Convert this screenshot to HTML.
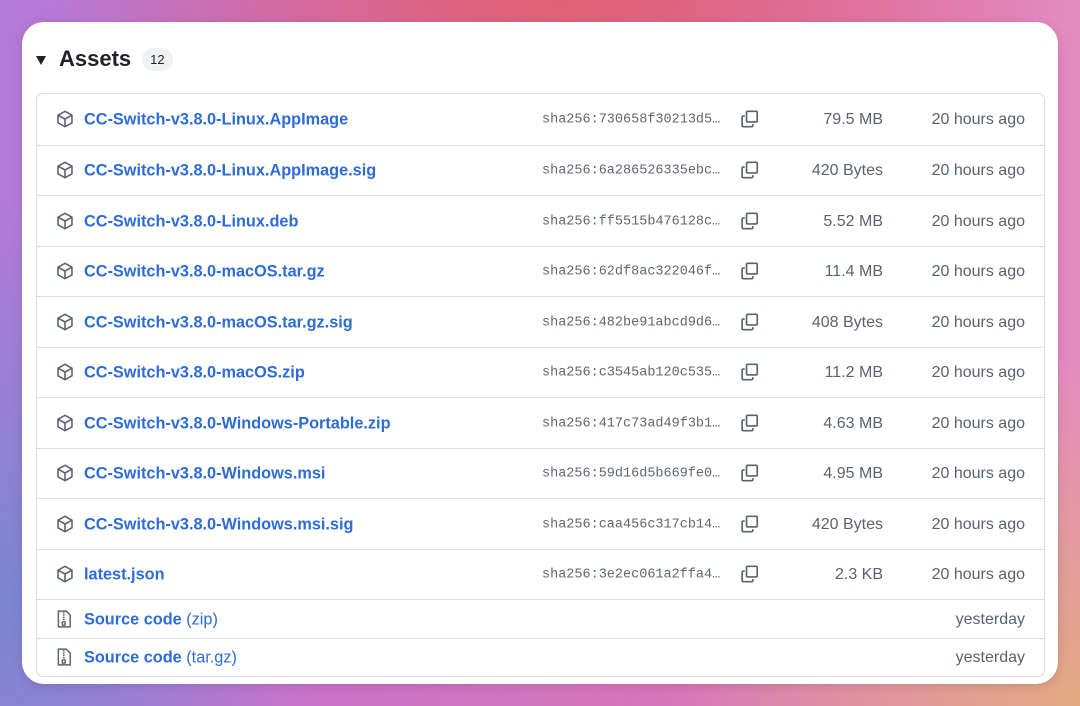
<!DOCTYPE html>
<html><head><meta charset="utf-8"><style>
*{margin:0;padding:0;box-sizing:border-box}
body{width:1080px;height:706px;overflow:hidden;font-family:"Liberation Sans",sans-serif;
background:
radial-gradient(ellipse 500px 120px at 560px 0px,#e25f70 0%,rgba(226,95,112,0) 100%),
linear-gradient(90deg,#b37ad8 0%,#c973c9 30%,#d874b8 60%,#e48bc0 100%);
position:relative}
.bg2{position:absolute;inset:0;
background:radial-gradient(ellipse 300px 400px at 0px 600px,#7a86d2 0%,rgba(122,134,210,0) 100%),
radial-gradient(ellipse 400px 350px at 1080px 706px,#e2a980 0%,rgba(226,169,128,0) 100%)}
.card{position:absolute;left:22px;top:22px;width:1036px;height:662px;background:#fff;border-radius:22px;box-shadow:0 2px 10px rgba(0,0,0,.12)}
.hdr{position:absolute;left:36px;top:46px;display:flex;align-items:center}
.tri{width:0;height:0;border-left:5.5px solid transparent;border-right:5.5px solid transparent;border-top:9px solid #1f2328;margin-right:13px;margin-top:3px}
.hdr h2{font-size:22px;font-weight:bold;color:#1f2328;margin-right:11px}
.badge{background:#eff1f3;border-radius:12px;font-size:13px;color:#1f2328;padding:4px 8px}
.tbl{position:absolute;left:36px;top:93px;width:1009px;border:1px solid #d8dee4;border-radius:7px}
.row{position:relative;height:50.5px;border-top:1px solid #d8dee4}
.row:first-child{border-top:none}
.row.s{height:38.5px}
.ic{position:absolute;left:19px;top:50%;transform:translateY(-50%)}
.nm{position:absolute;left:47px;top:50%;transform:translateY(-45%);font-size:16.3px;font-weight:bold;color:#2d6cd6;white-space:nowrap}
.nm span{font-weight:normal}
.hs{position:absolute;left:505px;top:50%;transform:translateY(-45%);font-family:"Liberation Mono",monospace;font-size:13.5px;color:#5f6770}
.cp{position:absolute;left:703px;top:50%;transform:translateY(-50%)}
.sz{position:absolute;right:161px;top:50%;transform:translateY(-45%);font-size:16px;color:#59636e}
.dt{position:absolute;right:19px;top:50%;transform:translateY(-45%);font-size:16px;color:#59636e}
</style></head><body><div class="bg2"></div>
<div class="card"></div>
<div class="hdr"><div class="tri"></div><h2>Assets</h2><span class="badge">12</span></div>
<div class="tbl" id="t"></div>
<script>
const box='<svg class="ic" width="18" height="18" viewBox="0 0 16 16" fill="none" stroke="#59636e" stroke-width="1.4" stroke-linejoin="round"><path d="M8 1.2 14.2 4.6v6.8L8 14.8 1.8 11.4V4.6Z"/><path d="M1.8 4.6 8 8l6.2-3.4M8 8v6.8"/></svg>';
const zip='<svg class="ic" width="16" height="18" viewBox="0 0 14 16" fill="none" stroke="#59636e" stroke-width="1.3"><path d="M2 1h7l3.5 3.5V15H2Z"/><path d="M6 2.5h1.5M6 4.5h1.5M6 6.5h1.5M6 8.5h1.5"/><rect x="5.5" y="10.5" width="2.5" height="3" rx=".5"/></svg>';
const cp='<svg class="cp" width="19" height="19" viewBox="0 0 16 16" fill="none" stroke="#59636e" stroke-width="1.4" stroke-linejoin="round"><path d="M4 5.5H2.8a1 1 0 0 0-1 1v7a1 1 0 0 0 1 1h7a1 1 0 0 0 1-1V12.3"/><rect x="5.5" y="1.5" width="9" height="9" rx="1"/></svg>';
const d=[["CC-Switch-v3.8.0-Linux.AppImage","730658f30213d5","79.5 MB"],["CC-Switch-v3.8.0-Linux.AppImage.sig","6a286526335ebc","420 Bytes"],["CC-Switch-v3.8.0-Linux.deb","ff5515b476128c","5.52 MB"],["CC-Switch-v3.8.0-macOS.tar.gz","62df8ac322046f","11.4 MB"],["CC-Switch-v3.8.0-macOS.tar.gz.sig","482be91abcd9d6","408 Bytes"],["CC-Switch-v3.8.0-macOS.zip","c3545ab120c535","11.2 MB"],["CC-Switch-v3.8.0-Windows-Portable.zip","417c73ad49f3b1","4.63 MB"],["CC-Switch-v3.8.0-Windows.msi","59d16d5b669fe0","4.95 MB"],["CC-Switch-v3.8.0-Windows.msi.sig","caa456c317cb14","420 Bytes"],["latest.json","3e2ec061a2ffa4","2.3 KB"]];
let h='';
for(const r of d)h+=`<div class="row">${box}<div class="nm">${r[0]}</div><div class="hs">sha256:${r[1]}…</div>${cp}<div class="sz">${r[2]}</div><div class="dt">20 hours ago</div></div>`;
for(const s of["zip","tar.gz"])h+=`<div class="row s">${zip}<div class="nm">Source code <span>(${s})</span></div><div class="dt">yesterday</div></div>`;
document.getElementById('t').innerHTML=h;
</script>
</body></html>
